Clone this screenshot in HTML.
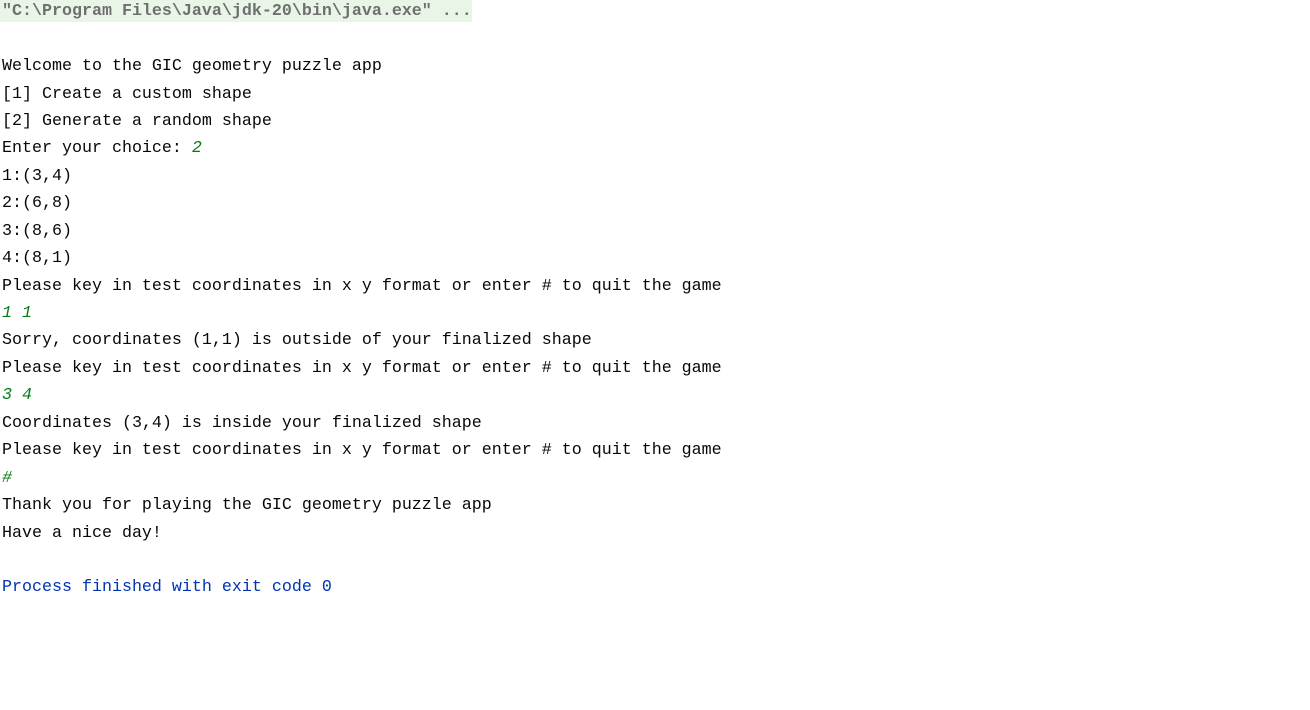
<!DOCTYPE html>
<html><head><meta charset="utf-8"><style>
html,body{margin:0;padding:0;background:#fff;width:1310px;height:710px;overflow:hidden}
pre{margin:0;position:absolute;left:2px;top:-1.8px;font-family:"Liberation Mono",monospace;font-size:16.67px;line-height:27.43px;color:#080808}
.h{position:absolute;left:0;top:0;width:472px;height:22px;background:#e9f6e7}
.ht{color:#6f6f6f;font-weight:bold}
.g{color:#067d17;font-style:italic}
.b{color:#0033b3}
</style></head><body>
<div class="h"></div>
<pre><span class="ht">"C:\Program Files\Java\jdk-20\bin\java.exe" ...</span>

Welcome to the GIC geometry puzzle app
[1] Create a custom shape
[2] Generate a random shape
Enter your choice: <span class="g">2</span>
1:(3,4)
2:(6,8)
3:(8,6)
4:(8,1)
Please key in test coordinates in x y format or enter # to quit the game
<span class="g">1 1</span>
Sorry, coordinates (1,1) is outside of your finalized shape
Please key in test coordinates in x y format or enter # to quit the game
<span class="g">3 4</span>
Coordinates (3,4) is inside your finalized shape
Please key in test coordinates in x y format or enter # to quit the game
<span class="g">#</span>
Thank you for playing the GIC geometry puzzle app
Have a nice day!

<span class="b">Process finished with exit code 0</span>
</pre>
</body></html>
